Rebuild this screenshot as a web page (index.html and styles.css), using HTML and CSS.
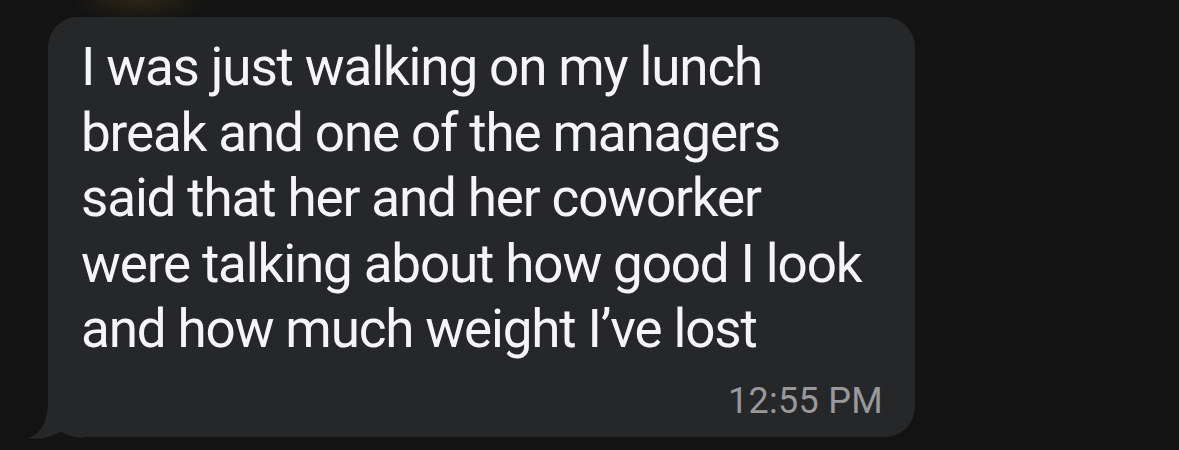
FILE: index.html
```html
<!DOCTYPE html>
<html lang="en">
<head>
<meta charset="utf-8">
<title>Message</title>
<link rel="stylesheet" href="styles.css">
</head>
<body>
<div class="thread">
  <div class="bubble">
    <p class="msg">I was just walking on my lunch<br>break and one of the managers<br>said that her and her coworker<br>were talking about how good I look<br>and how much weight I’ve lost</p>
    <div class="time">12:55 PM</div>
    <svg class="tail" width="60" height="40" viewBox="0 0 60 40" aria-hidden="true">
      <path d="M22 0 L22 2 Q21 31 2 37 Q18 40 36 30 Q44 36 56 37 L56 0 Z" fill="#262729"/>
    </svg>
  </div>
</div>
</body>
</html>
```

FILE: styles.css
```css
html, body {
  margin: 0;
  padding: 0;
}
body {
  width: 1179px;
  height: 450px;
  overflow: hidden;
  background:
    radial-gradient(ellipse 70px 22px at 140px 0px, rgba(110, 85, 30, 0.28), rgba(110, 85, 30, 0) 100%),
    #131313;
  font-family: Roboto, "Noto Sans", "Liberation Sans", sans-serif;
}
.thread {
  padding: 17px 0 0 48px;
}
.bubble {
  position: relative;
  box-sizing: border-box;
  width: 867px;
  height: 420px;
  padding: 18px 32px 0 33px;
  background: #262729;
  border-radius: 30px;
  display: flex;
  flex-direction: column;
}
.msg {
  margin: 0;
  font-size: 53px;
  line-height: 65.5px;
  letter-spacing: -1.15px;
  color: #f5f5f7;
  white-space: nowrap;
}
.time {
  align-self: flex-end;
  margin-top: 17px;
  font-size: 36px;
  line-height: 42px;
  letter-spacing: 0.3px;
  color: #98989d;
}
.tail {
  position: absolute;
  left: -22px;
  top: 384px;
}
```
